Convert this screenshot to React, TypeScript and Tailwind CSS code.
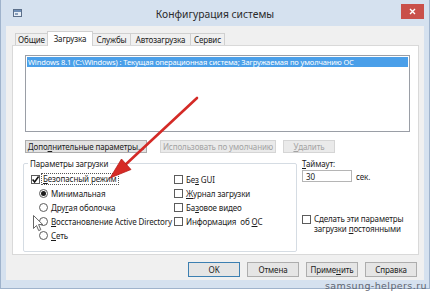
import React from "react";

function Check({ checked = false }: { checked?: boolean }) {
  return (
    <span className="relative inline-flex w-[9px] h-[9px] shrink-0 border border-[#5c5c5c] bg-white">
      {checked && (
        <svg viewBox="0 0 9 9" className="absolute left-[-1px] top-[-1px] w-[9px] h-[9px]">
          <path d="M1.6 4.6 L3.6 6.9 L7.6 1.6" stroke="#111" strokeWidth="1.6" fill="none" />
        </svg>
      )}
    </span>
  );
}

function Radio({ checked = false }: { checked?: boolean }) {
  return (
    <span className="inline-flex items-center justify-center w-[9px] h-[9px] shrink-0 rounded-full border border-[#5c5c5c] bg-white">
      {checked && <span className="w-[5px] h-[5px] rounded-full bg-[#1e1e1e]" />}
    </span>
  );
}

function U({ children }: { children: React.ReactNode }) {
  return <span className="underline underline-offset-1">{children}</span>;
}

export default function App() {
  return (
    <div className="relative w-[434px] h-[293px] bg-white overflow-hidden font-['Noto_Sans',sans-serif] text-[#1b1b1b]">
      <div className="w-[430px] h-[289px] bg-[#d5e1ef] border-x border-b border-[#9fb3cc] flex flex-col">
        {/* title bar */}
        <div className="h-[26px] flex items-start shrink-0">
          <div className="w-[40px] pl-[12px] pt-[9px]">
            <svg width="9" height="8" viewBox="0 0 9 8">
              <rect x="0.5" y="0.5" width="8" height="7" fill="#e8eef6" stroke="#5b6f8a" />
              <rect x="1" y="1" width="7" height="2" fill="#6e8db5" />
              <rect x="2" y="4" width="3" height="2" fill="#8aa0bc" />
            </svg>
          </div>
          <div className="flex-1 text-center text-[10.3px] leading-[14px] pt-[7px] text-[#2a2a2a]">
            Конфигурация системы
          </div>
          <div className="w-[40px] flex justify-end pr-[5px] pt-[4px]">
            <div className="w-[23px] h-[15px] bg-[#c9504a] flex items-center justify-center">
              <svg width="7" height="7" viewBox="0 0 7 7">
                <path d="M1 1 L6 6 M6 1 L1 6" stroke="#fff" strokeWidth="1.4" />
              </svg>
            </div>
          </div>
        </div>

        {/* body */}
        <div className="flex-1 mx-[5px] mb-[8px] bg-[#f0f0f0] flex flex-col text-[8px] leading-[11px] tracking-[-0.12px]">
          {/* tabs */}
          <div className="flex items-end pl-[9px] pt-[5px] h-[19px] shrink-0">
            <div className="w-[33px] h-[12px] border border-b-0 border-[#d0d0d0] bg-[#f0f0f0] flex items-center justify-center">Общие</div>
            <div className="relative z-10 -ml-px w-[46px] h-[15px] -mb-px border border-b-0 border-[#d0d0d0] bg-white flex items-start pt-[1px] justify-center">Загрузка</div>
            <div className="-ml-px w-[39px] h-[12px] border border-b-0 border-[#d0d0d0] bg-[#f0f0f0] flex items-center justify-center">Службы</div>
            <div className="-ml-px w-[61px] h-[12px] border border-b-0 border-[#d0d0d0] bg-[#f0f0f0] flex items-center justify-center">Автозагрузка</div>
            <div className="-ml-px w-[35px] h-[12px] border border-b-0 border-[#d0d0d0] bg-[#f0f0f0] flex items-center justify-center">Сервис</div>
          </div>

          {/* panel */}
          <div className="ml-[6px] w-[407px] h-[210px] shrink-0 border border-[#d9d9d9] bg-white flex flex-col">
            <div className="ml-[12px] mt-[9px] w-[385px] h-[77px] border border-[#9a9ea6] bg-white p-[1px]">
              <div className="h-[10px] bg-[#4a9fe9] text-white text-[7.5px] leading-[10px] pl-[1px] whitespace-nowrap overflow-hidden">
                Windows 8.1 (C:\Windows) : Текущая операционная система; Загружаемая по умолчанию ОС
              </div>
            </div>

            <div className="ml-[12px] mt-[8px] flex h-[13px]">
              <div className="w-[122px] h-[13px] border border-[#adadad] bg-[#e3e3e3] flex items-center justify-center whitespace-nowrap">
                Допо<U>л</U>нительные параметры...
              </div>
              <div className="ml-[13px] w-[116px] h-[13px] border border-[#d5d5d5] bg-[#eaeaea] flex items-center justify-center text-[#a3a3a3] whitespace-nowrap">
                Использовать по умолчанию
              </div>
              <div className="ml-[7px] w-[52px] h-[13px] border border-[#d5d5d5] bg-[#eaeaea] flex items-center justify-center text-[#a3a3a3]">
                <U>У</U>далить
              </div>
            </div>

            <div className="flex mt-[5px]">
              <fieldset className="ml-[10px] w-[274px] border border-[#d5dce3] rounded-[2px] pb-[9px]">
                <legend className="ml-[4px] px-[2px] leading-[11px]">Параметры загрузки</legend>
                <div className="flex pt-[3px]">
                  <div className="w-[150px] flex flex-col">
                    <div className="h-[14px] flex items-center pl-[7px]">
                      <Check checked />
                      <span className="ml-[1px] px-[1px] border border-dotted border-[#555] leading-[10px] whitespace-nowrap">
                        <U>Б</U>езопасный режим
                      </span>
                    </div>
                    <div className="h-[14px] flex items-center pl-[15px] gap-[3px] whitespace-nowrap">
                      <Radio checked />
                      <span>Минимальная</span>
                    </div>
                    <div className="h-[14px] flex items-center pl-[15px] gap-[3px] whitespace-nowrap">
                      <Radio />
                      <span>Дру<U>г</U>ая оболочка</span>
                    </div>
                    <div className="h-[14px] flex items-center pl-[15px] gap-[3px] whitespace-nowrap">
                      <Radio />
                      <span><U>В</U>осстановление Active Directory</span>
                    </div>
                    <div className="h-[14px] flex items-center pl-[15px] gap-[3px] whitespace-nowrap">
                      <Radio />
                      <span><U>С</U>еть</span>
                    </div>
                  </div>
                  <div className="flex flex-col">
                    <div className="h-[14px] flex items-center gap-[3px] whitespace-nowrap">
                      <Check />
                      <span>Бе<U>з</U> GUI</span>
                    </div>
                    <div className="h-[14px] flex items-center gap-[3px] whitespace-nowrap">
                      <Check />
                      <span><U>Ж</U>урнал загрузки</span>
                    </div>
                    <div className="h-[14px] flex items-center gap-[3px] whitespace-nowrap">
                      <Check />
                      <span>Ба<U>з</U>овое видео</span>
                    </div>
                    <div className="h-[14px] flex items-center gap-[3px] whitespace-nowrap">
                      <Check />
                      <span>Информация &nbsp;об <U>О</U>С</span>
                    </div>
                  </div>
                </div>
              </fieldset>

              <div className="ml-[5px] flex flex-col">
                <div className="leading-[11px]"><U>Т</U>аймаут:</div>
                <div className="flex items-center mt-[1px]">
                  <div className="w-[50px] h-[12px] border border-[#b5b5b5] bg-white pl-[3px] flex items-center">30</div>
                  <span className="ml-[4px]">сек.</span>
                </div>
                <div className="flex mt-[33px]">
                  <Check />
                  <div className="ml-[3px] leading-[10px] -mt-[1px]">
                    <div>Сделать эти параметры</div>
                    <div>загрузки <U>п</U>остоянными</div>
                  </div>
                </div>
              </div>
            </div>
          </div>

          {/* bottom buttons */}
          <div className="mt-[7px] flex justify-end pr-[7px] gap-[7px]">
            <div className="w-[52px] h-[15px] border border-[#3c7fb1] bg-[#e5e5e5] flex items-center justify-center">OK</div>
            <div className="w-[52px] h-[15px] border border-[#adadad] bg-[#e5e5e5] flex items-center justify-center">Отмена</div>
            <div className="w-[52px] h-[15px] border border-[#adadad] bg-[#e5e5e5] flex items-center justify-center">Приме<U>н</U>ить</div>
            <div className="w-[52px] h-[15px] border border-[#adadad] bg-[#e5e5e5] flex items-center justify-center">Справка</div>
          </div>
        </div>
      </div>

      {/* red arrow overlay */}
      <svg className="absolute left-0 top-0 pointer-events-none" width="434" height="293" viewBox="0 0 434 293">
        <line x1="197" y1="98" x2="124" y2="166" stroke="#d42a26" strokeWidth="2.6" strokeLinecap="round" />
        <polygon points="110,178 121.5,159 131,169.5" fill="#d62a25" stroke="#b81e1b" strokeWidth="0.8" strokeLinejoin="round" />
      </svg>

      {/* mouse cursor */}
      <svg className="absolute left-[33px] top-[215px] pointer-events-none" width="12" height="18" viewBox="0 0 12 18">
        <path d="M0.5 0.5 L0.5 13.5 L3.5 10.5 L5.7 15.6 L7.8 14.7 L5.6 9.6 L9.8 9.6 Z" fill="#fff" stroke="#555" strokeWidth="0.9" strokeLinejoin="round" />
      </svg>

      {/* watermark */}
      <div className="absolute left-[325px] top-[280px] text-[9.5px] leading-[12px] tracking-[0.4px] text-[#5d6470] font-['DejaVu_Sans',sans-serif] whitespace-nowrap">
        samsung-helpers.ru
      </div>
    </div>
  );
}
